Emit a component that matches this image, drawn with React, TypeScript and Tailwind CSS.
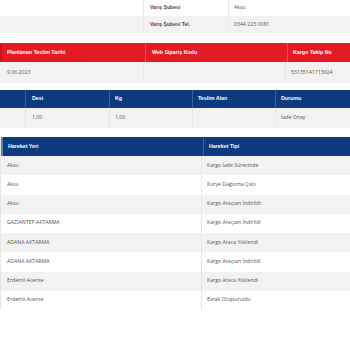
const head = "font-['Liberation_Sans',Arial,sans-serif] font-bold text-[5.3px] text-white";
const body = "font-['Open_Sans',sans-serif] text-[5.2px] text-[#555]";
const label = "font-['Liberation_Sans',Arial,sans-serif] font-bold text-[5.1px] text-[#4a4a4a]";

const movements = [
  ['Aksu', 'Kargo İade Sürecinde'],
  ['Aksu', 'Kurye Dağıtıma Çıktı'],
  ['Aksu', 'Kargo Araçtan İndirildi'],
  ['GAZİANTEP AKTARMA', 'Kargo Araçtan İndirildi'],
  ['ADANA AKTARMA', 'Kargo Araca Yüklendi'],
  ['ADANA AKTARMA', 'Kargo Araçtan İndirildi'],
  ['Erdemli Acente', 'Kargo Araca Yüklendi'],
  ['Erdemli Acente', 'Evrak Oluşturuldu'],
];

export default function App() {
  return (
    <div className="w-[350px] h-[350px] bg-white overflow-hidden">
      {/* branch info */}
      <div className="grid grid-cols-[143px_85px_1fr] h-[16px]">
        <div />
        <div className={`border-l border-[#e6e6e6] pl-[6px] flex items-center ${label}`}>Varış Şubesi</div>
        <div className={`border-l border-[#e6e6e6] pl-[5px] flex items-center ${body}`}>Aksu</div>
      </div>
      <div className="grid grid-cols-[143px_85px_1fr] h-[17px] bg-[#f2f2f2]">
        <div />
        <div className={`border-l border-[#e6e6e6] pl-[6px] flex items-center ${label}`}>Varış Şubesi Tel.</div>
        <div className={`border-l border-[#e6e6e6] pl-[5px] flex items-center ${body}`}>0344 223 0081</div>
      </div>

      {/* delivery */}
      <div className="mt-[10px]">
        <div className="grid grid-cols-[143px_142px_1fr] h-[19px] bg-[#e41b23] border-l-2 border-[#c9141b]">
          <div className={`flex items-center pl-[5px] ${head}`}>Planlanan Teslim Tarihi</div>
          <div className={`flex items-center pl-[6px] border-l border-[#f04a50] ${head}`}>Web Sipariş Kodu</div>
          <div className={`flex items-center pl-[5px] border-l border-[#f04a50] ${head}`}>Kargo Takip No</div>
        </div>
        <div className="grid grid-cols-[143px_142px_1fr] h-[21px] bg-[#f2f2f2]">
          <div className={`flex items-center pl-[7px] ${body}`}>9.06.2023</div>
          <div className="border-l border-[#e6e6e6]" />
          <div className={`flex items-center pl-[5px] border-l border-[#e6e6e6] ${body}`}>53135141713624</div>
        </div>
      </div>

      {/* package */}
      <div className="mt-[7px]">
        <div className="grid grid-cols-[25px_84px_83px_83px_1fr] h-[18px] bg-[#0b3a7e]">
          <div />
          <div className={`flex items-center pl-[6px] border-l border-[#3a62a0] ${head}`}>Desi</div>
          <div className={`flex items-center pl-[5px] border-l border-[#3a62a0] ${head}`}>Kg</div>
          <div className={`flex items-center pl-[5px] border-l border-[#3a62a0] ${head}`}>Teslim Alan</div>
          <div className={`flex items-center pl-[5px] border-l border-[#3a62a0] ${head}`}>Durumu</div>
        </div>
        <div className="grid grid-cols-[25px_84px_83px_83px_1fr] h-[20px] bg-[#f2f2f2]">
          <div />
          <div className={`flex items-center pl-[6px] border-l border-[#e6e6e6] ${body}`}>1,00</div>
          <div className={`flex items-center pl-[5px] border-l border-[#e6e6e6] ${body}`}>1,00</div>
          <div className="border-l border-[#e6e6e6]" />
          <div className={`flex items-center pl-[5px] border-l border-[#e6e6e6] ${body}`}>İade Onay</div>
        </div>
      </div>

      {/* movements */}
      <div className="mt-[9px] border-l border-[#e6e6e6]">
        <div className="grid grid-cols-[200px_1fr] h-[19px] bg-[#0b3a7e] border-l-2 border-[#5b7fb5]">
          <div className={`flex items-center pl-[5px] ${head}`}>Hareket Yeri</div>
          <div className={`flex items-center pl-[5px] border-l border-[#3a62a0] ${head}`}>Hareket Tipi</div>
        </div>
        {movements.map(([place, type], i) => (
          <div key={i} className={`grid grid-cols-[200px_1fr] h-[19.25px] ${i % 2 === 0 ? 'bg-[#f2f2f2]' : 'bg-white'}`}>
            <div className={`flex items-center pl-[6px] ${body}`}>{place}</div>
            <div className={`flex items-center pl-[5px] border-l border-[#e6e6e6] ${body}`}>{type}</div>
          </div>
        ))}
      </div>
    </div>
  );
}
